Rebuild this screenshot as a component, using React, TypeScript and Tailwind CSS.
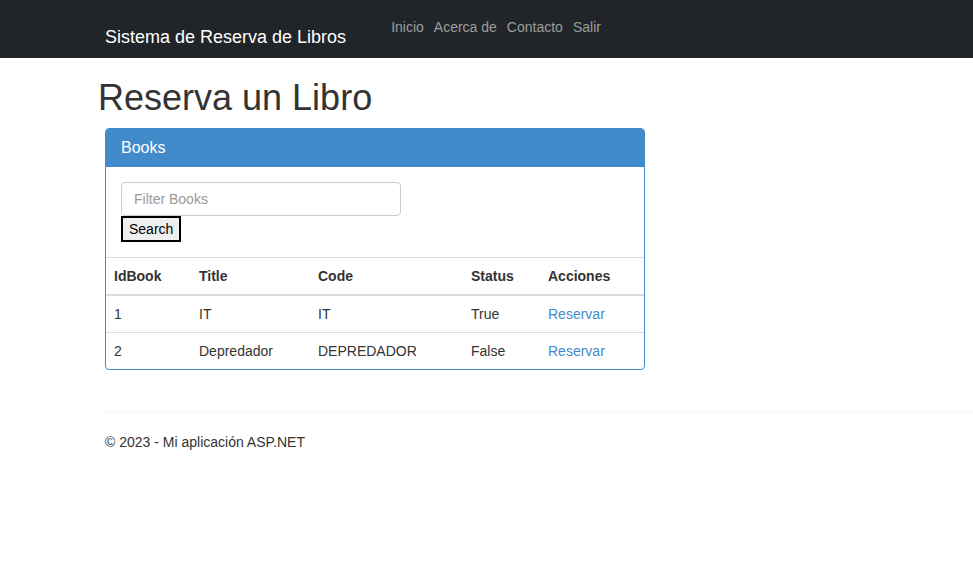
import React from 'react';

const books = [
  { id: 1, title: 'IT', code: 'IT', status: 'True' },
  { id: 2, title: 'Depredador', code: 'DEPREDADOR', status: 'False' },
];

export default function App() {
  return (
    <div className="min-h-screen bg-white text-[14px] text-[#333] font-['Liberation_Sans',Arial,sans-serif]">
      {/* Navbar */}
      <nav className="h-[58px] bg-[#212529] flex items-start pl-[105px]">
        <a className="mt-[27px] text-[18px] leading-[20px] text-white">Sistema de Reserva de Libros</a>
        <ul className="ml-[45px] mt-[19px] flex gap-[10px] text-[14px] leading-[16px] text-[#9d9d9d]">
          <li>Inicio</li>
          <li>Acerca de</li>
          <li>Contacto</li>
          <li>Salir</li>
        </ul>
      </nav>

      <div className="pl-[98px]">
        <h1 className="mt-[20px] text-[36px] leading-[40px] text-[#333]">Reserva un Libro</h1>
      </div>

      <div className="pl-[105px]">
        {/* Panel */}
        <div className="mt-[10px] w-[540px] border border-[#428bca] rounded-[4px] overflow-hidden">
          <div className="h-[38px] bg-[#428bca] px-[15px] flex items-center text-[16px] text-white">
            Books
          </div>
          <div className="p-[15px]">
            <input
              className="block w-[280px] h-[34px] border border-[#ccc] rounded-[4px] px-[12px] text-[14px] placeholder:text-[#999] outline-none"
              placeholder="Filter Books"
            />
            <button className="block h-[26px] px-[6px] border-2 border-black bg-[#efefef] text-[14px] leading-[20px] text-black">
              Search
            </button>
          </div>
          <table className="w-full table-fixed border-collapse">
            <colgroup>
              <col className="w-[85px]" />
              <col className="w-[119px]" />
              <col className="w-[153px]" />
              <col className="w-[77px]" />
              <col />
            </colgroup>
            <thead>
              <tr className="border-t border-[#ddd] border-b-2">
                {['IdBook', 'Title', 'Code', 'Status', 'Acciones'].map((h) => (
                  <th key={h} className="p-[8px] text-left font-bold leading-[20px] text-[#333]">
                    {h}
                  </th>
                ))}
              </tr>
            </thead>
            <tbody>
              {books.map((b, i) => (
                <tr key={b.id} className={i > 0 ? 'border-t border-[#ddd]' : ''}>
                  <td className="p-[8px] leading-[20px]">{b.id}</td>
                  <td className="p-[8px] leading-[20px]">{b.title}</td>
                  <td className="p-[8px] leading-[20px]">{b.code}</td>
                  <td className="p-[8px] leading-[20px]">{b.status}</td>
                  <td className="p-[8px] leading-[20px]">
                    <a className="text-[#428bca] cursor-pointer">Reservar</a>
                  </td>
                </tr>
              ))}
            </tbody>
          </table>
        </div>

        {/* Footer */}
        <hr className="mt-[41px] border-0 border-t border-[#f7f7f7]" />
        <footer className="mt-[20px] leading-[20px]">© 2023 - Mi aplicación ASP.NET</footer>
      </div>
    </div>
  );
}
